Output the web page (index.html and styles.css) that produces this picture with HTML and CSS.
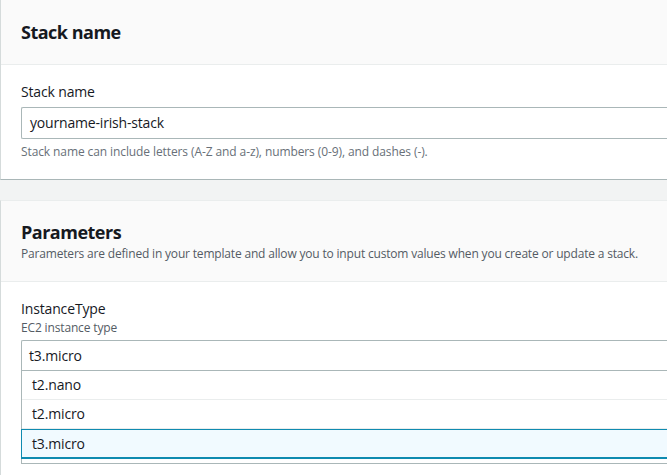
FILE: index.html
```html
<!DOCTYPE html>
<html lang="en">
<head>
<meta charset="utf-8">
<link rel="stylesheet" href="styles.css">
</head>
<body>
<div class="page">
  <section class="panel panel-first">
    <header class="panel-header">
      <h2 class="panel-title">Stack name</h2>
    </header>
    <div class="panel-body">
      <label class="field-label">Stack name</label>
      <div class="text-input">yourname-irish-stack</div>
      <p class="field-hint">Stack name can include letters (A-Z and a-z), numbers (0-9), and dashes (-).</p>
    </div>
  </section>

  <section class="panel panel-second">
    <header class="panel-header panel-header-desc">
      <h2 class="panel-title">Parameters</h2>
      <p class="panel-desc">Parameters are defined in your template and allow you to input custom values when you create or update a stack.</p>
    </header>
    <div class="panel-body">
      <label class="field-label">InstanceType</label>
      <p class="field-desc">EC2 instance type</p>
      <div class="select">t3.micro</div>
      <ul class="dropdown">
        <li class="option">t2.nano</li>
        <li class="option">t2.micro</li>
        <li class="option option-selected">t3.micro</li>
      </ul>
    </div>
  </section>
</div>
</body>
</html>
```

FILE: styles.css
```css
html, body {
  margin: 0;
  padding: 0;
}
body {
  background: #f2f3f3;
  overflow: hidden;
  width: 667px;
  height: 475px;
  font-family: "Open Sans", "Noto Sans", sans-serif;
  color: #16191f;
}
.page {
  display: flex;
  flex-direction: column;
  gap: 20px;
  width: 100%;
}
.panel {
  background: #fff;
  border-left: 1px solid #d5dbdb;
}
.panel-first {
  border-bottom: 1px solid #a9b6b7;
}
.panel-second {
  border-top: 1px solid #eaeded;
}
.panel-header {
  background: #fafafa;
  border-bottom: 1px solid #eaeded;
  padding: 21px 20px 21px 20px;
}
.panel-header-desc {
  padding: 20px 20px 19px 20px;
}
.panel-title {
  margin: 0;
  font-size: 18px;
  line-height: 22px;
  font-weight: 700;
  letter-spacing: -0.5px;
}
.panel-desc {
  margin: 3px 0 0 0;
  font-size: 12px;
  line-height: 16px;
  color: #545b64;
  letter-spacing: -0.18px;
}
.panel-body {
  padding: 17px 0 19px 20px;
  display: flex;
  flex-direction: column;
}
.field-label {
  font-size: 14px;
  line-height: 20px;
  letter-spacing: -0.15px;
}
.field-desc {
  margin: 1px 0 0 0;
  font-size: 12px;
  line-height: 16px;
  color: #545b64;
  letter-spacing: -0.15px;
}
.text-input {
  margin-top: 5px;
  height: 30px;
  border: 1px solid #aab7b8;
  border-right: none;
  border-radius: 2px 0 0 2px;
  padding: 0 9px 0 8px;
  font-size: 14px;
  line-height: 30px;
  letter-spacing: -0.18px;
}
.field-hint {
  margin: 5px 0 0 0;
  font-size: 12px;
  line-height: 16px;
  color: #687078;
  letter-spacing: -0.1px;
}
.select {
  margin-top: 4px;
  height: 29px;
  border: 1px solid #aab7b8;
  border-bottom: none;
  border-right: none;
  border-radius: 2px 0 0 0;
  padding: 0 7px;
  font-size: 14px;
  line-height: 29px;
  letter-spacing: -0.15px;
}
.dropdown {
  list-style: none;
  margin: 0;
  padding: 0 0 4px 0;
  border: 1px solid #aab7b8;
  border-right: none;
}
.option {
  height: 28px;
  line-height: 28px;
  padding: 0 10px;
  font-size: 14px;
  letter-spacing: -0.15px;
  border-bottom: 1px solid #eaeded;
}
.option-selected {
  background: #f1faff;
  border: 1px solid #0f8bb0;
  border-bottom: 2px solid #0f8bb0;
  border-right: none;
  margin-left: -1px;
  height: 27px;
  line-height: 27px;
}
```
